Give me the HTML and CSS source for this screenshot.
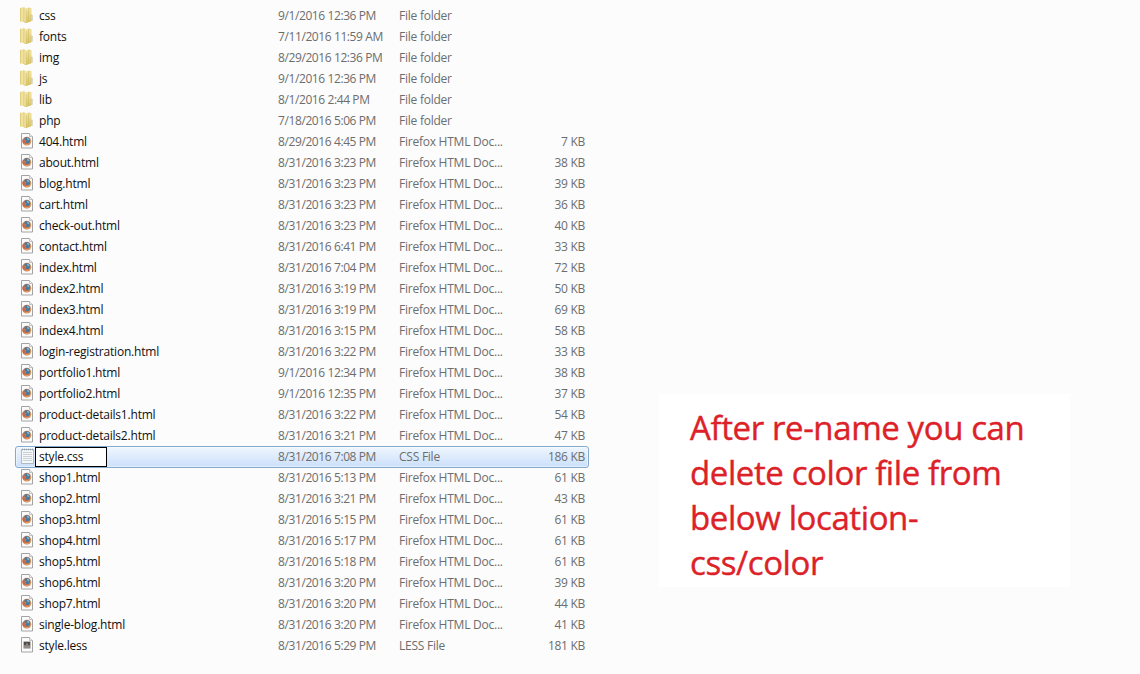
FILE: index.html
```html
<!DOCTYPE html>
<html lang="en">
<head>
<meta charset="utf-8">
<title>Files</title>
<link rel="stylesheet" href="styles.css">
</head>
<body>
<svg class="defs" aria-hidden="true">
  <defs>
    <linearGradient id="gold" x1="0" x2="1" y1="0" y2="0"><stop offset="0" stop-color="#d9c471"/><stop offset=".4" stop-color="#f3e7a4"/><stop offset="1" stop-color="#e8d57d"/></linearGradient>
    <linearGradient id="goldDark" x1="0" x2="0" y1="0" y2="1"><stop offset="0" stop-color="#f0e49f"/><stop offset="1" stop-color="#d8c162"/></linearGradient>
    <symbol id="folder" viewBox="0 0 16 16">
      <path d="M1 1 5.500 0v15L1 14.500z" fill="url(#gold)"/>
      <path d="M5 1.500 10.500.5l2 1V14H5z" fill="#e9d98b"/>
      <path d="M4.500 1.500 8.500.8V15.500H5z" fill="#f3e8ae"/>
      <path d="M7 2.500V16l5-1.500V2z" fill="url(#goldDark)"/>
      <path d="M5 .8V15l2 .8V3M9.500 2v12" fill="none" stroke="#cdb660" stroke-width=".5"/>
      <path d="M12.300 8h1v5.500h-1z" fill="#e4e8df" stroke="#b8b58c" stroke-width=".5"/>
    </symbol>
    <symbol id="page" viewBox="0 0 16 16">
      <path d="M2.500.5h8l3 3v11.500h-11z" fill="#fbfbfb" stroke="#a2a3a4"/>
      <path d="M10.500.5v3h3" fill="#eef0f1" stroke="#b4b6b8" stroke-width=".8"/>
    </symbol>
    <symbol id="html" viewBox="0 0 16 16">
      <use href="#page"/>
      <circle cx="7.800" cy="8.200" r="4.400" fill="#cf7a4e"/>
      <path d="M5.500 4.900c1.500-1.200 4.200-.8 5.400 1.200.6 1.500.3 3-.7 3.800-1.800 1-3.700.2-3.700-1.300L7.700 7.500 5.500 6.800z" fill="#467ba2"/>
      <path d="M7.800 4.800l1.900.4.8 1.400-1.600.7z" fill="#8abdd0"/>
      <path d="M3.700 6 5.500 6.900l.3 1.800c.5 1.700 2.600 2 4.500.9-1.200 2.200-4.500 2.700-6.100.6-.8-1-.9-2.700-.5-4.200z" fill="#c5694b"/>
      <path d="M5 11c1.800 1.200 4.500.7 5.500-.8M11 10c.7-.8.9-2.200.5-3.500" fill="none" stroke="#e3ad72" stroke-width=".8"/>
    </symbol>
    <symbol id="less" viewBox="0 0 16 16">
      <use href="#page"/>
      <path d="M4.500 4.500h7v7h-7z" fill="#817a76"/>
      <path d="M5 5h6v3H5z" fill="#514b4a"/>
      <path d="M5 9.500h6v1H5z" fill="#a59e98"/>
      <path d="M7 6.500h2V8H7z" fill="#8f8985"/>
    </symbol>
    <symbol id="text" viewBox="0 0 16 16">
      <path d="M2.500 1.500h12v14h-12z" fill="#f5f7f8" stroke="#a2adb6" stroke-width=".8"/>
      <path d="M4 4.500h9M4 6.500h9M4 8.500h9M4 10.500h9M4 12.500h9" stroke="#bcc6cd" stroke-width=".8"/>
      <path d="M3 1.500h11" stroke="#8d979f" stroke-width="1.500" stroke-dasharray="1 1"/>
    </symbol>
  </defs>
</svg>
<main class="explorer">
  <div class="files" id="files"></div>
  <aside class="note">After re-name you can<br>delete color file from<br>below location-<br>css/color</aside>
</main>
<script src="files.js"></script>
</body>
</html>
```

FILE: styles.css
```css
body {
  margin: 0;
  background: #fcfcfc;
  font-family: "Open Sans", "Noto Sans", sans-serif;
}

.defs {
  display: block;
  width: 0;
  height: 0;
}

.explorer {
  display: flex;
  align-items: flex-start;
  box-sizing: border-box;
  height: 674px;
  padding: 5px 0 0 15px;
  overflow: hidden;
}

.files {
  width: 574px;
}

.row {
  display: grid;
  grid-template-columns: 20px 239px 121px 110px 76px;
  align-items: center;
  box-sizing: border-box;
  height: 21px;
  padding-left: 4px;
  font-size: 12px;
  line-height: 19px;
  color: #6d6d6d;
  white-space: nowrap;
}

.row.selected {
  height: 22px;
  margin-bottom: -1px;
  padding: 0 0 1px 3px;
  border: 1px solid #84a9cc;
  border-radius: 3px;
  background: linear-gradient(#eff6fe, #cbe0fb);
  box-shadow: inset 0 0 0 1px rgba(255, 255, 255, 0.45);
}

.icon {
  display: block;
  width: 16px;
  height: 16px;
  margin-top: -1px;
}

.name {
  color: #101010;
  letter-spacing: -0.2px;
}

.date {
  letter-spacing: -0.4px;
}

.type {
  letter-spacing: -0.24px;
}

.size {
  text-align: right;
  letter-spacing: -0.3px;
}

.selected .name {
  box-sizing: border-box;
  width: 72px;
  height: 20px;
  margin: 0 0 -1px -4px;
  padding-left: 3px;
  border: 1px solid #000;
  background: #fff;
  line-height: 18px;
}

.note {
  box-sizing: border-box;
  width: 411px;
  height: 193px;
  margin: 389px 0 0 70px;
  padding: 11px 0 0 31px;
  background: #fff;
  color: #dc2228;
  font-size: 33px;
  line-height: 45px;
  letter-spacing: -0.4px;
  white-space: nowrap;
  -webkit-text-stroke: 0.4px #dc2228;
}
```

FILE: files.js
```js
const folders = [
  ["css", "9/1/2016 12:36 PM"],
  ["fonts", "7/11/2016 11:59 AM"],
  ["img", "8/29/2016 12:36 PM"],
  ["js", "9/1/2016 12:36 PM"],
  ["lib", "8/1/2016 2:44 PM"],
  ["php", "7/18/2016 5:06 PM"]
].map(([name, date]) => ["folder", name, date, "File folder", ""]);

const html = (name, date, size) => ["html", name + ".html", date, "Firefox HTML Doc...", size + " KB"];

const entries = [
  ...folders,
  html("404", "8/29/2016 4:45 PM", 7),
  html("about", "8/31/2016 3:23 PM", 38),
  html("blog", "8/31/2016 3:23 PM", 39),
  html("cart", "8/31/2016 3:23 PM", 36),
  html("check-out", "8/31/2016 3:23 PM", 40),
  html("contact", "8/31/2016 6:41 PM", 33),
  html("index", "8/31/2016 7:04 PM", 72),
  html("index2", "8/31/2016 3:19 PM", 50),
  html("index3", "8/31/2016 3:19 PM", 69),
  html("index4", "8/31/2016 3:15 PM", 58),
  html("login-registration", "8/31/2016 3:22 PM", 33),
  html("portfolio1", "9/1/2016 12:34 PM", 38),
  html("portfolio2", "9/1/2016 12:35 PM", 37),
  html("product-details1", "8/31/2016 3:22 PM", 54),
  html("product-details2", "8/31/2016 3:21 PM", 47),
  ["text", "style.css", "8/31/2016 7:08 PM", "CSS File", "186 KB"],
  html("shop1", "8/31/2016 5:13 PM", 61),
  html("shop2", "8/31/2016 3:21 PM", 43),
  html("shop3", "8/31/2016 5:15 PM", 61),
  html("shop4", "8/31/2016 5:17 PM", 61),
  html("shop5", "8/31/2016 5:18 PM", 61),
  html("shop6", "8/31/2016 3:20 PM", 39),
  html("shop7", "8/31/2016 3:20 PM", 44),
  html("single-blog", "8/31/2016 3:20 PM", 41),
  ["less", "style.less", "8/31/2016 5:29 PM", "LESS File", "181 KB"]
];

document.getElementById("files").innerHTML = entries.map(([icon, name, date, type, size]) => `
  <div class="row${icon === "text" ? " selected" : ""}">
    <svg class="icon"><use href="#${icon}"/></svg>
    <span class="name">${name}</span>
    <span class="date">${date}</span>
    <span class="type">${type}</span>
    <span class="size">${size}</span>
  </div>`).join("");
```
